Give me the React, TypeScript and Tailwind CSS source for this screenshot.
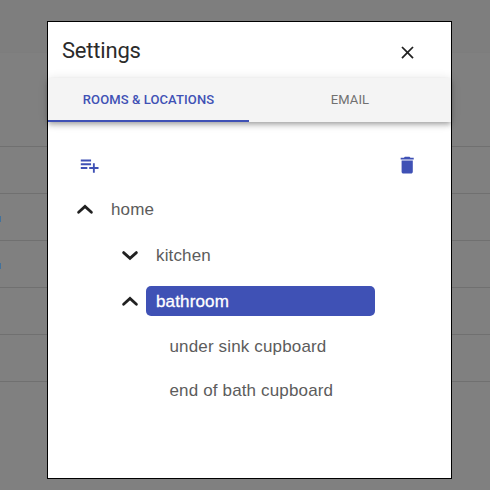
import React from 'react';

const ROW_MARKS = [false, false, true, true, false, false];

function Backdrop() {
  return (
    <div className="h-[490px] w-[490px] overflow-hidden bg-[#808080] font-['Roboto',sans-serif]">
      <div className="h-[53px] border-b border-[#7d7d7d] bg-[#7e7e7e]" />
      <div className="h-[47px]" />
      {ROW_MARKS.map((marked, i) => (
        <div key={i} className="flex h-[47px] items-center border-b border-[#707070]">
          {marked && <div className="mt-[3px] h-1.5 w-px bg-[#43729b]" />}
        </div>
      ))}
    </div>
  );
}

function Chevron({ open }: { open: boolean }) {
  return (
    <svg width="18" height="14" viewBox="0 0 18 14" fill="none" stroke="#212121" strokeWidth="2.8" strokeLinecap="round" strokeLinejoin="miter">
      <path d={open ? 'M2.6 10.2 L9 4.4 L15.4 10.2' : 'M2.6 4.6 L9 10.4 L15.4 4.6'} />
    </svg>
  );
}

function Toolbar() {
  return (
    <div className="flex justify-between pt-[31.5px] pr-[32.5px] pl-[30px] text-[#3f51b5]">
      <svg width="22.4" height="22.4" viewBox="0 0 24 24" fill="currentColor">
        <path d="M14 10H3v2h11v-2zm0-4H3v2h11V6zm4 8v-4h-2v4h-4v2h4v4h2v-4h4v-2h-4zM3 16h7v-2H3v2z" />
      </svg>
      <svg width="22.4" height="22.4" viewBox="0 0 24 24" fill="currentColor">
        <path d="M6 19c0 1.100.9 2 2 2h8c1.100 0 2-.9 2-2V7H6v12zM19 4h-3.500l-1-1h-5l-1 1H5v2h14V4z" />
      </svg>
    </div>
  );
}

export default function App() {
  return (
    <div className="relative h-[490px] w-[490px] overflow-hidden">
      <Backdrop />
      <div className="absolute top-[21px] left-[47px] h-[458px] w-[405px] border border-black bg-white font-['Roboto',sans-serif]">
        <div className="flex h-[56px] items-center justify-between pr-[33px] pl-[14px]">
          <h2 className="mt-0.5 text-[22px] leading-8 tracking-[-0.2px] text-[#2b2b2b]">Settings</h2>
          <svg className="mt-[5px]" width="21" height="21" viewBox="0 0 24 24" fill="#212121">
            <path d="M19 6.410 17.590 5 12 10.590 6.410 5 5 6.410 10.590 12 5 17.590 6.410 19 12 13.410 17.590 19 19 17.590 13.410 12z" />
          </svg>
        </div>
        <div className="flex h-[44px] bg-[#f4f4f4] text-[13px] font-medium tracking-[0.1px] shadow-[0_2px_4px_-1px_rgba(0,0,0,0.2),0_4px_5px_0_rgba(0,0,0,0.14),0_1px_10px_0_rgba(0,0,0,0.12)]">
          <div className="flex w-[201px] items-center justify-center border-b-2 border-[#3f51b5] pt-px text-[#3f51b5]">ROOMS &amp; LOCATIONS</div>
          <div className="flex flex-1 items-center justify-center border-b-2 border-transparent pt-px font-normal text-[#707070]">EMAIL</div>
        </div>
        <Toolbar />
        <div className="font-['Liberation_Sans',Arial,sans-serif] text-[17px] tracking-[0.15px] text-[#5c5c5c]">
          <div className="mt-[18px] flex h-[30px] items-center pl-[28px]">
            <Chevron open />
            <span className="ml-[17px] pt-0.5">home</span>
          </div>
          <div className="mt-4 flex h-[30px] items-center pl-[73px]">
            <Chevron open={false} />
            <span className="ml-[17px] pt-0.5">kitchen</span>
          </div>
          <div className="mt-4 flex h-[30px] items-center pl-[73px]">
            <Chevron open />
            <span className="ml-[7px] flex h-[30px] w-[229px] items-center rounded-[5px] bg-[#3f51b5] pt-0.5 pl-2.5 text-white [-webkit-text-stroke:0.3px_white]">bathroom</span>
          </div>
          <div className="mt-[15px] flex h-[30px] items-center pt-0.5 pl-[121.5px]">under sink cupboard</div>
          <div className="mt-[14px] flex h-[30px] items-center pt-0.5 pl-[121.5px]">end of bath cupboard</div>
        </div>
      </div>
    </div>
  );
}
